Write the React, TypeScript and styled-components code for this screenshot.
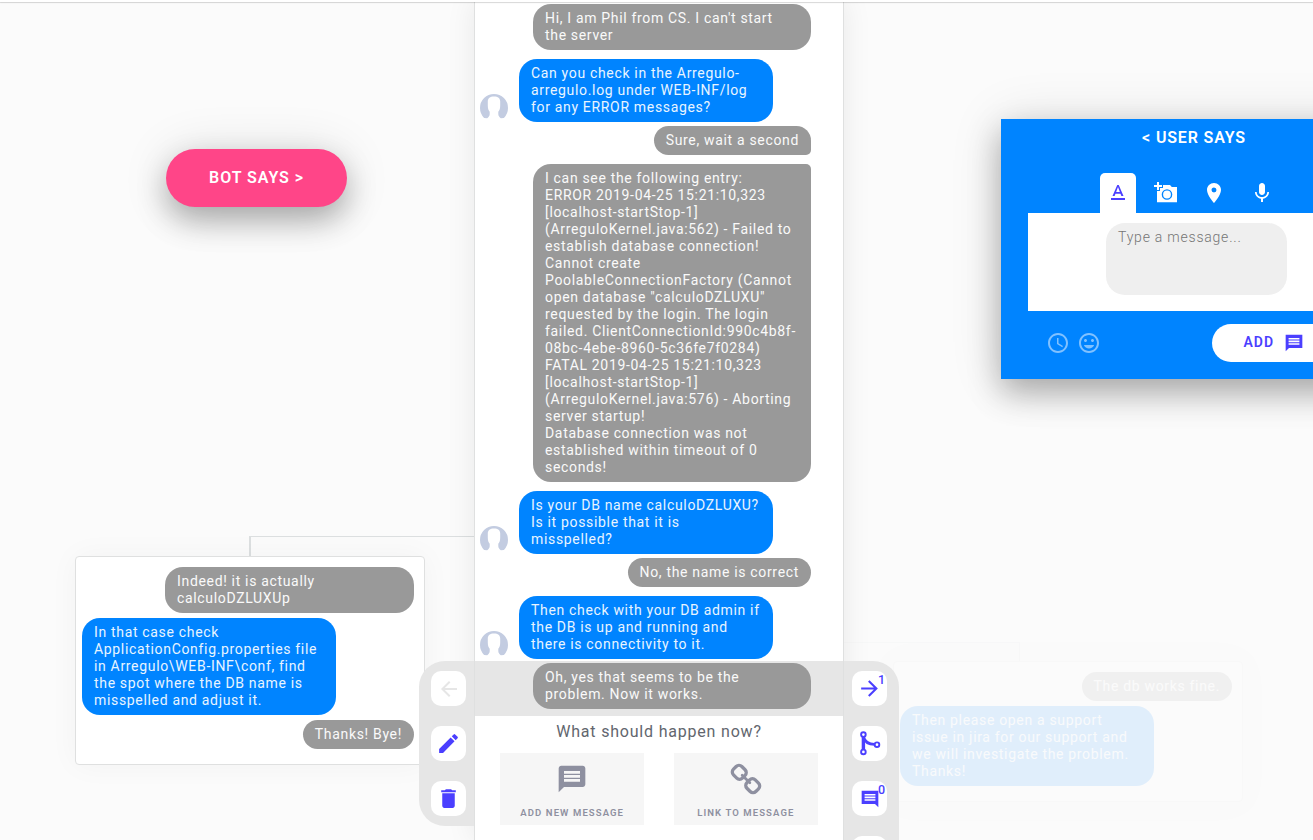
import React from "react";
import styled, { createGlobalStyle, css } from "styled-components";
import {
  MdAccessTime,
  MdArrowBack,
  MdArrowForward,
  MdDelete,
  MdEdit,
  MdMessage,
  MdMic,
  MdMood,
  MdPlace,
  MdTextFormat,
} from "react-icons/md";

const BLUE = "#0084ff";
const INDIGO = "#4b3fff";
const RAISED = "0 14px 30px rgba(0, 0, 0, 0.28), 0 2px 50px rgba(0, 0, 0, 0.12)";

const GlobalStyle = createGlobalStyle`
  * { box-sizing: border-box; }
  body {
    margin: 0;
    overflow: hidden;
    background: #fbfbfb;
    font-family: Roboto, "Liberation Sans", sans-serif;
  }
  svg { display: block; flex: none; }
`;

const Page = styled.main`
  height: 840px;
  overflow: hidden;
  display: grid;
  grid-template-columns: 474px 370px 469px;
  grid-template-rows: 840px;
`;

const TopEdge = styled.div`
  position: absolute;
  inset: 0 0 auto 0;
  height: 2px;
  background: #fff;
  box-shadow: 0 1px 1px rgba(0, 0, 0, 0.16);
  z-index: 5;
`;

const Side = styled.section`
  display: flex;
  flex-direction: column;
  align-items: flex-start;
  min-width: 0;
`;

const BotButton = styled.button`
  width: 181px;
  height: 58px;
  margin: 149px 0 329px 166px;
  padding: 0;
  border: 0;
  border-radius: 29px;
  background: #ff4588;
  color: #fff;
  font: 600 16px/20px Roboto, sans-serif;
  letter-spacing: 0.95px;
  box-shadow: ${RAISED};
`;

const Branch = styled.div<{ $ghost?: boolean }>`
  display: flex;
  flex-direction: column;
  width: 399px;
  opacity: ${(p) => (p.$ghost ? 0.1 : 1)};
  margin-left: ${(p) => (p.$ghost ? 0 : 75)}px;
`;

const Connector = styled.div<{ $side: "left" | "right" }>`
  height: ${(p) => (p.$side === "left" ? 20 : 19)}px;
  border-top: 1px solid #dcdfe0;
  ${(p) =>
    p.$side === "left"
      ? css`
          margin-left: 174px;
          border-left: 2px solid #dcdfe0;
        `
      : css`
          width: 176px;
          border-right: 1px solid #dcdfe0;
        `}
`;

const BranchCard = styled.div<{ $shift?: number; $height: number }>`
  display: flex;
  flex-direction: column;
  gap: 5px;
  width: 350px;
  height: ${(p) => p.$height}px;
  margin-left: ${(p) => p.$shift ?? 0}px;
  padding: 10px 10px 0 6px;
  border: 1px solid #dfe0e0;
  border-radius: 4px;
  background: #fff;
  box-shadow: 0 0 30px rgba(0, 0, 0, 0.04);
`;

const Bubble = styled.div<{ $from: "bot" | "user"; $width?: number; $tail?: "top" | "bottom" }>`
  width: ${(p) => (p.$width ? `${p.$width}px` : "auto")};
  padding: 6px 12px;
  border-radius: 18px;
  white-space: pre;
  font-size: 14px;
  line-height: 17px;
  letter-spacing: 0.67px;
  color: ${(p) => (p.$from === "bot" ? "#e8f4ff" : "#fafafa")};
  background: ${(p) => (p.$from === "bot" ? BLUE : "#999")};
  align-self: ${(p) => (p.$from === "bot" ? "flex-start" : "flex-end")};
  ${(p) => p.$tail === "top" && "border-top-right-radius: 5px;"}
  ${(p) => p.$tail === "bottom" && "border-radius: 14.5px 14.5px 5px 14.5px;"}
`;

const Column = styled.section`
  display: flex;
  flex-direction: column;
  padding-top: 2px;
  background: #fff;
  border: solid #dfe0e0;
  border-width: 0 1px;
  box-shadow: 0 0 28px rgba(0, 0, 0, 0.08);
`;

const BotRow = styled.div`
  display: flex;
  align-items: flex-end;
  gap: 11px;
  padding: 2px 5px;
`;

const UserRow = styled.div<{ $selected?: boolean }>`
  position: relative;
  display: flex;
  flex-direction: column;
  padding: 2px 32px 7px;
  background: ${(p) => (p.$selected ? "#e6e6e6" : "transparent")};
`;

const Rail = styled.div<{ $side: "left" | "right" }>`
  position: absolute;
  top: 0;
  ${(p) =>
    p.$side === "left"
      ? "right: calc(100% + 1px); border-radius: 26px 0 0 26px; padding: 10px 8px 10px 12px;"
      : "left: calc(100% + 1px); border-radius: 0 26px 26px 0; padding: 10px 12px 10px 8px;"}
  display: flex;
  flex-direction: column;
  gap: 20px;
  width: 55px;
  background: #e6e6e6;
  z-index: 2;
`;

const Tool = styled.button<{ $off?: boolean }>`
  position: relative;
  display: flex;
  align-items: center;
  justify-content: center;
  width: 35px;
  height: 35px;
  padding: 0;
  border: 0;
  border-radius: 10px;
  background: #fff;
  color: ${(p) => (p.$off ? "#e6e6e6" : INDIGO)};
`;

const Count = styled.span`
  position: absolute;
  top: 2px;
  right: 2px;
  font: 500 12.5px/14px Roboto, sans-serif;
`;

const Prompt = styled.h2`
  margin: 5px 0 10px;
  text-align: center;
  font-size: 16px;
  font-weight: 400;
  line-height: 22px;
  letter-spacing: 0.8px;
  color: #62666e;
`;

const Choices = styled.div`
  display: flex;
  justify-content: space-between;
  padding: 0 25px;
`;

const Choice = styled.button`
  display: flex;
  flex-direction: column;
  align-items: center;
  justify-content: space-between;
  width: 144.4px;
  height: 72px;
  padding: 10px 0 6px;
  border: 0;
  background: #f6f6f6;
  color: #8e90a0;
  font: 600 9.5px/12px Roboto, sans-serif;
  letter-spacing: 1.1px;
  white-space: nowrap;
`;

const Composer = styled.div`
  display: flex;
  flex-direction: column;
  width: 386px;
  height: 260px;
  margin: 119px 0 263px 157px;
  padding: 9px 27px 17px;
  background: ${BLUE};
  box-shadow: ${RAISED};
`;

const Title = styled.h3`
  margin: 0 0 25px;
  text-align: center;
  color: #fff;
  font: 600 16px/20px Roboto, sans-serif;
  letter-spacing: 0.85px;
`;

const Tabs = styled.div`
  display: flex;
  gap: 12px;
  padding-left: 72px;
`;

const Tab = styled.button<{ $active?: boolean }>`
  display: flex;
  align-items: center;
  justify-content: center;
  width: 36px;
  height: 40px;
  padding: 0;
  border: 0;
  border-radius: 5px 5px 0 0;
  background: ${(p) => (p.$active ? "#fff" : "transparent")};
  color: ${(p) => (p.$active ? INDIGO : "#fff")};
`;

const Editor = styled.div`
  height: 98px;
  padding: 10px 0 0 78px;
  background: #fff;
`;

const Field = styled.div`
  width: 181px;
  height: 72px;
  padding: 6px 12px;
  border-radius: 19px;
  background: #efefef;
  color: #757575;
  font-size: 14px;
  font-weight: 300;
  line-height: 17px;
  letter-spacing: 0.78px;
`;

const Footer = styled.div`
  display: flex;
  align-items: center;
  gap: 7px;
  padding: 13px 0 0 18px;
  color: #80c1ff;
`;

const AddButton = styled.button`
  display: flex;
  align-items: center;
  gap: 10px;
  width: 130px;
  height: 38px;
  margin-left: 104px;
  padding: 0 0 0 31.5px;
  border: 0;
  border-radius: 19px;
  background: #fff;
  color: ${INDIGO};
  font: 600 14px/18px Roboto, sans-serif;
  letter-spacing: 1px;
`;

const AddLabel = styled.span`
  padding-bottom: 2px;
`;

const Avatar = () => (
  <svg width="28" height="28" viewBox="0 0 28 28">
    <path
      d="M4.1 23.9A14 14 0 1 1 23.9 23.9L20.8 24.3C19.6 23 18.3 22 18.3 20.2V17.8C19.6 16.4 20.2 14.2 20.2 11.5V7.6C20.2 4.2 18 2.4 14 2.4S7.8 4.2 7.8 7.6V11.5C7.8 14.2 8.4 16.4 9.7 17.8V20.2C9.7 22 8.4 23 7.2 24.3Z"
      fill="#c3cce1"
    />
  </svg>
);

const SharpMessage = ({ flip, size = 20 }: { flip?: boolean; size?: number }) => (
  <svg width={size} height={size} viewBox="0 0 24 24" fill="currentColor">
    <path
      transform={flip ? "matrix(-1 0 0 1 24 0)" : undefined}
      d="M2 2V22L6 18H22V2ZM18.5 14H5.5V12.2H18.5ZM18.5 11H5.5V9H18.5ZM18.5 7.8H5.5V6H18.5Z"
    />
  </svg>
);

const CameraIcon = () => (
  <svg width="24" height="24" viewBox="0 0 24 24" fill="currentColor">
    <path d="M3 4V1H5V4H8V6H5V9H3V6H0V4ZM6 10V7H9V4H16L17.8 6H23V21.2H3V10Z" />
    <circle cx="13" cy="13.5" r="4.6" fill="none" stroke={BLUE} strokeWidth="1.4" />
  </svg>
);

const ForkIcon = () => (
  <svg width="24" height="26" viewBox="0 0 24 26" fill="none" stroke="currentColor" strokeWidth="1.9">
    <path d="M5.4 6V20" strokeWidth="3.4" />
    <path d="M5.4 6C6.9 11 10.4 13.4 16.4 13.4" strokeWidth="2.8" />
    <circle cx="5.4" cy="3.6" r="2.3" fill="#fff" />
    <circle cx="5.4" cy="20.9" r="2.3" fill="#fff" />
    <circle cx="19" cy="13.7" r="2.3" fill="#fff" />
  </svg>
);

const ChainIcon = () => (
  <svg width="32" height="32" viewBox="0 0 32 32" fill="none" stroke="currentColor" strokeWidth="3.3">
    <g transform="rotate(45 16 16)">
      <rect x="0.2" y="10.1" width="12.6" height="11.8" rx="4" />
      <rect x="19.2" y="10.1" width="12.6" height="11.8" rx="4" />
      <path d="M10.6 16H21.4" strokeWidth="2.8" strokeLinecap="round" />
    </g>
  </svg>
);

const LOG = `I can see the following entry:
ERROR 2019-04-25 15:21:10,323
[localhost-startStop-1]
(ArreguloKernel.java:562) - Failed to
establish database connection!
Cannot create
PoolableConnectionFactory (Cannot
open database "calculoDZLUXU"
requested by the login. The login
failed. ClientConnectionId:990c4b8f-
08bc-4ebe-8960-5c36fe7f0284)
FATAL 2019-04-25 15:21:10,323
[localhost-startStop-1]
(ArreguloKernel.java:576) - Aborting
server startup!
Database connection was not
established within timeout of 0
seconds!`;

const BotMessage = ({ text }: { text: string }) => (
  <BotRow>
    <Avatar />
    <Bubble $from="bot" $width={254}>{text}</Bubble>
  </BotRow>
);

export default function App() {
  return (
    <>
      <GlobalStyle />
      <TopEdge />
      <Page>
        <Side>
          <BotButton>BOT SAYS &gt;</BotButton>
          <Branch>
            <Connector $side="left" />
            <BranchCard $height={209}>
              <Bubble $from="user" $width={249}>{"Indeed! it is actually\ncalculoDZLUXUp"}</Bubble>
              <Bubble $from="bot" $width={254}>
                {"In that case check\nApplicationConfig.properties file\nin Arregulo\\WEB-INF\\conf, find\nthe spot where the DB name is\nmisspelled and adjust it."}
              </Bubble>
              <Bubble $from="user">Thanks! Bye!</Bubble>
            </BranchCard>
          </Branch>
        </Side>

        <Column>
          <UserRow>
            <Bubble $from="user" $width={278}>{"Hi, I am Phil from CS. I can't start\nthe server"}</Bubble>
          </UserRow>
          <BotMessage text={"Can you check in the Arregulo-\narregulo.log under WEB-INF/log\nfor any ERROR messages?"} />
          <UserRow>
            <Bubble $from="user" $tail="bottom">Sure, wait a second</Bubble>
          </UserRow>
          <UserRow>
            <Bubble $from="user" $width={278} $tail="top">{LOG}</Bubble>
          </UserRow>
          <BotMessage text={"Is your DB name calculoDZLUXU?\nIs it possible that it is\nmisspelled?"} />
          <UserRow>
            <Bubble $from="user">No, the name is correct</Bubble>
          </UserRow>
          <BotMessage text={"Then check with your DB admin if\nthe DB is up and running and\nthere is connectivity to it."} />
          <UserRow $selected>
            <Rail $side="left">
              <Tool $off><MdArrowBack size={24} /></Tool>
              <Tool><MdEdit size={25} /></Tool>
              <Tool><MdDelete size={25} /></Tool>
            </Rail>
            <Bubble $from="user" $width={278}>{"Oh, yes that seems to be the\nproblem. Now it works."}</Bubble>
            <Rail $side="right">
              <Tool><MdArrowForward size={25} /><Count>1</Count></Tool>
              <Tool><ForkIcon /></Tool>
              <Tool><SharpMessage flip /><Count>0</Count></Tool>
              <Tool />
            </Rail>
          </UserRow>
          <Prompt>What should happen now?</Prompt>
          <Choices>
            <Choice><MdMessage size={32} />ADD NEW MESSAGE</Choice>
            <Choice><ChainIcon />LINK TO MESSAGE</Choice>
          </Choices>
        </Column>

        <Side>
          <Composer>
            <Title>&lt; USER SAYS</Title>
            <Tabs>
              <Tab $active><MdTextFormat size={24} /></Tab>
              <Tab><CameraIcon /></Tab>
              <Tab><MdPlace size={24} /></Tab>
              <Tab><MdMic size={24} /></Tab>
            </Tabs>
            <Editor>
              <Field>Type a message...</Field>
            </Editor>
            <Footer>
              <MdAccessTime size={24} />
              <MdMood size={24} />
              <AddButton><AddLabel>ADD</AddLabel><SharpMessage /></AddButton>
            </Footer>
          </Composer>
          <Branch $ghost>
            <Connector $side="right" />
            <BranchCard $shift={49} $height={141}>
              <Bubble $from="user">The db works fine.</Bubble>
              <Bubble $from="bot" $width={254}>
                {"Then please open a support\nissue in jira for our support and\nwe will investigate the problem.\nThanks!"}
              </Bubble>
            </BranchCard>
          </Branch>
        </Side>
      </Page>
    </>
  );
}
